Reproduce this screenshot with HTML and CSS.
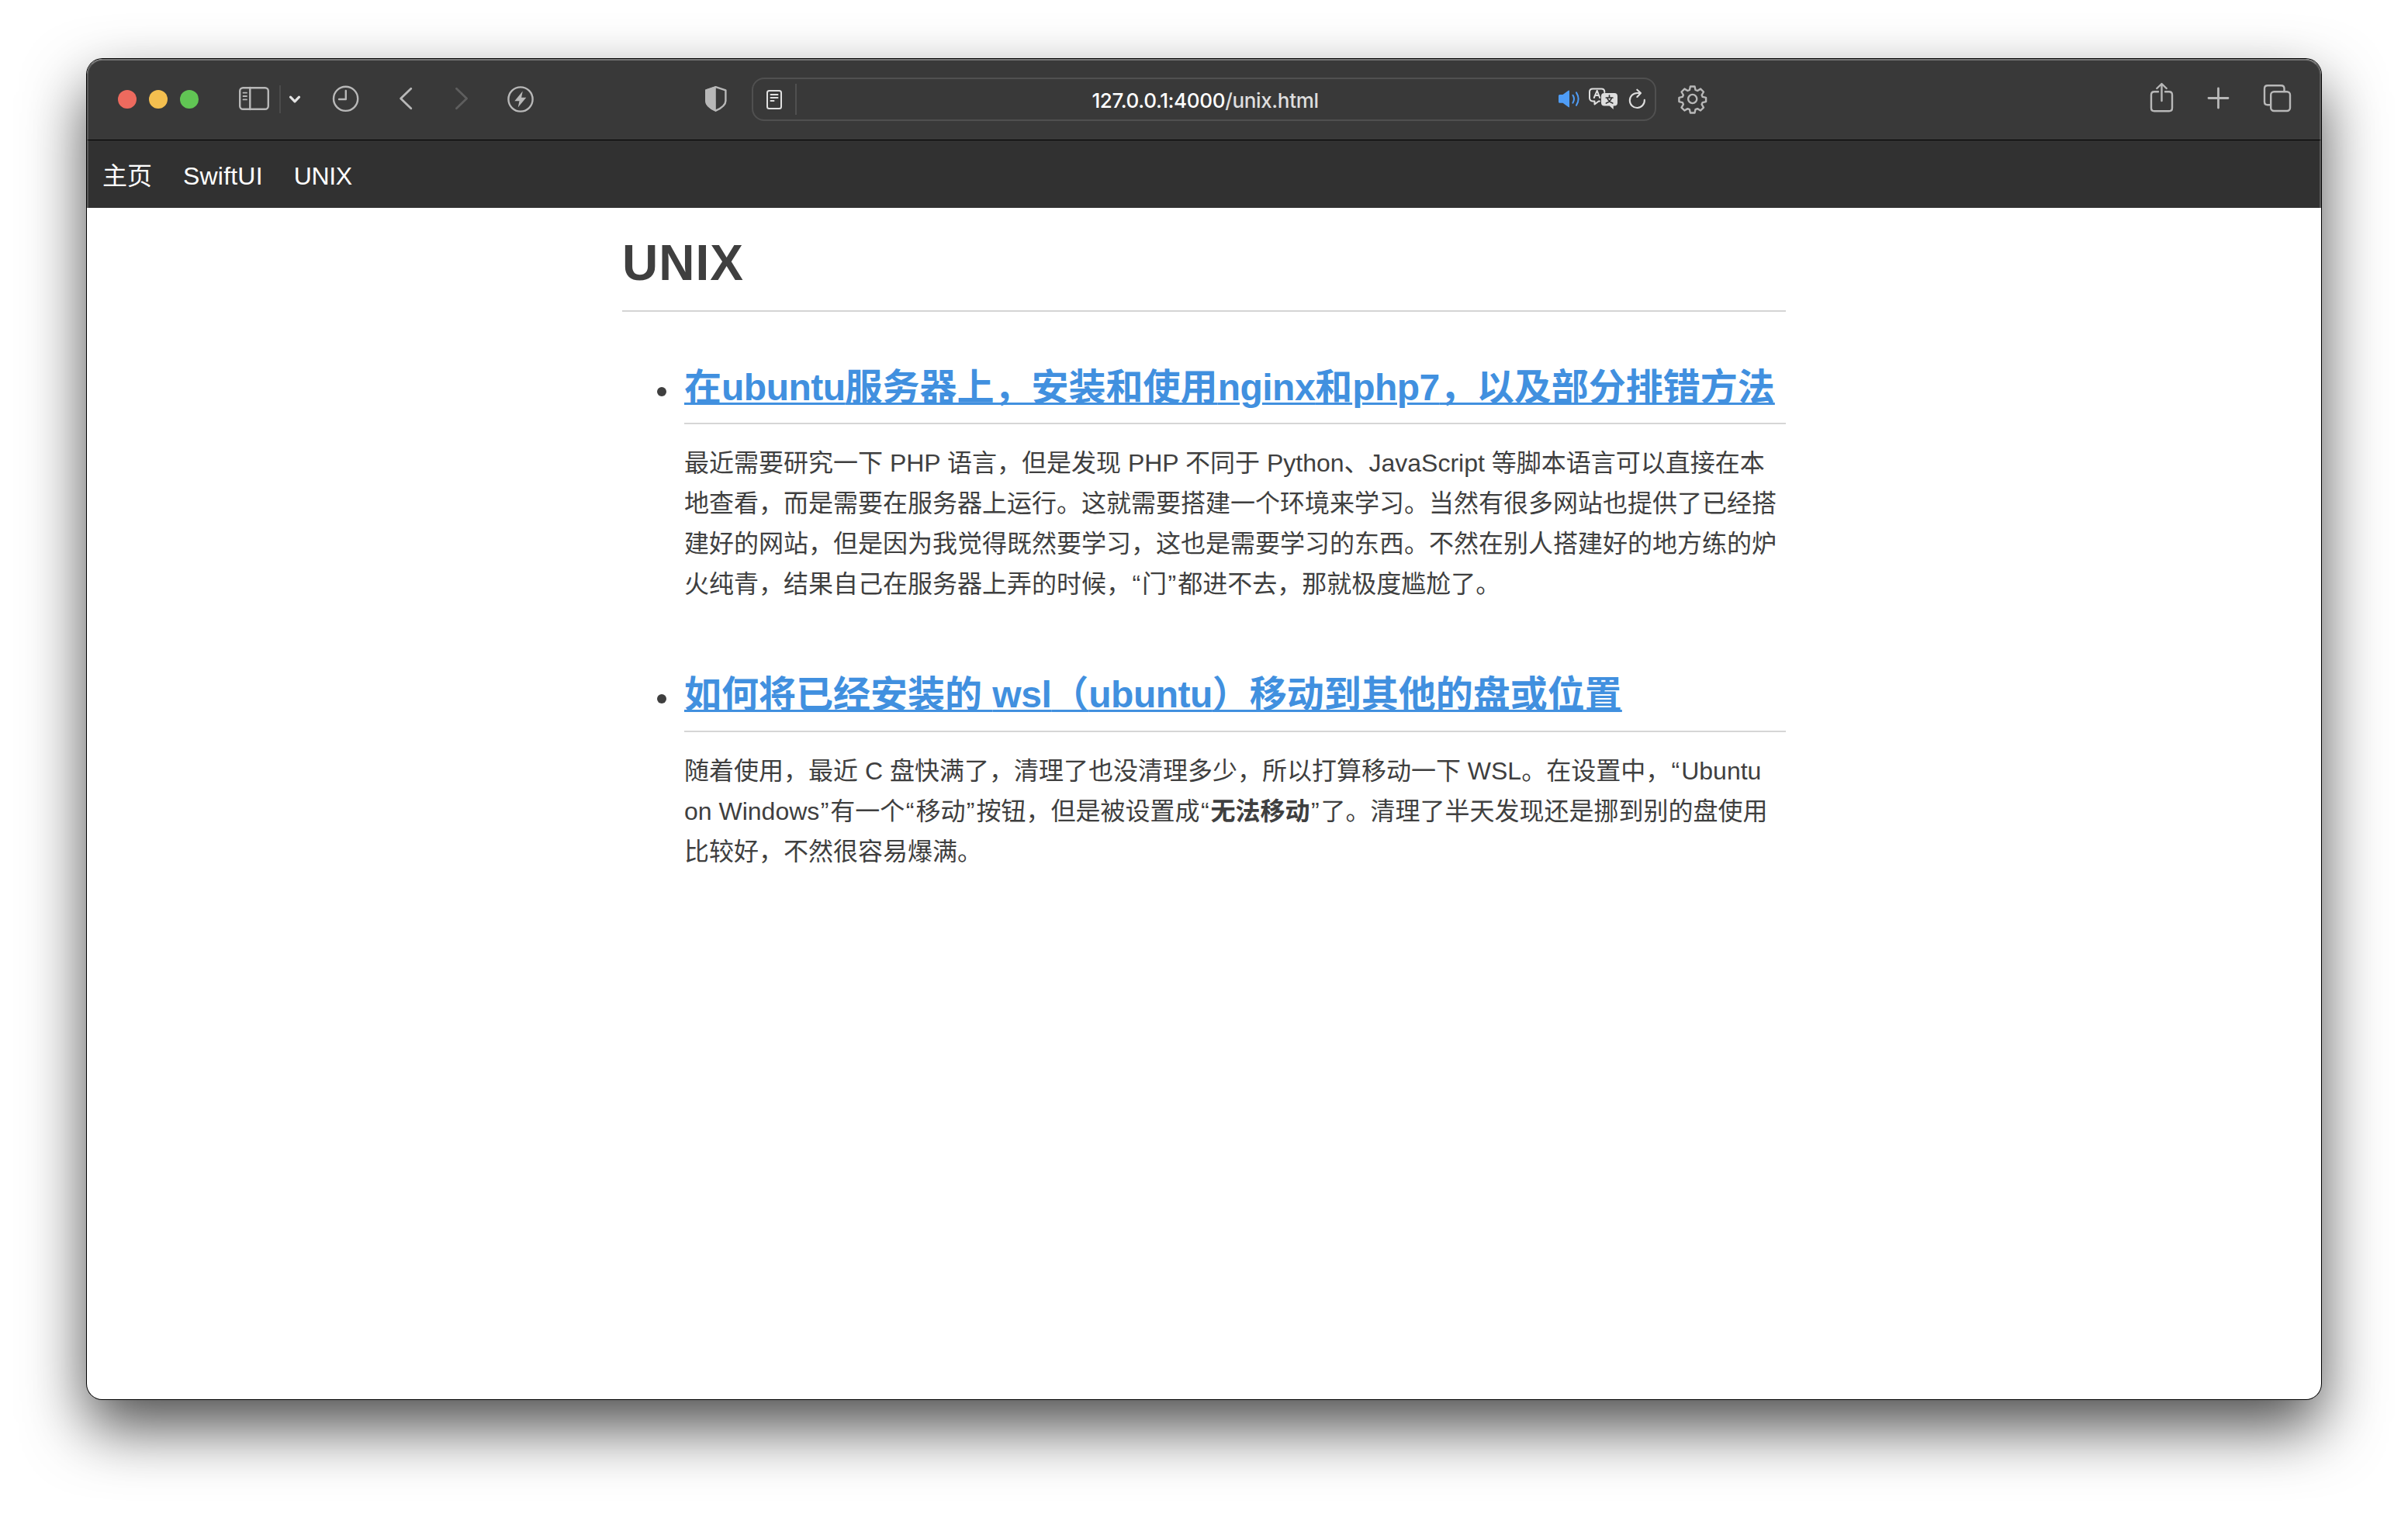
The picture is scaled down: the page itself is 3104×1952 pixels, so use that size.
FILE: index.html
```html
<!DOCTYPE html>
<html lang="zh-CN">
<head>
<meta charset="utf-8">
<title>UNIX</title>
<link rel="stylesheet" href="styles.css">
</head>
<body>
<div class="window">
  <div class="toolbar">
    <div class="lights"><i class="light red"></i><i class="light yellow"></i><i class="light green"></i></div>
    <svg class="icon sidebar" width="48" height="48" viewBox="304 104 48 48"><rect x="309.2" y="113.2" width="36.6" height="27.6" rx="4"/><path d="M322.3 113v28"/><path class="thin" d="M313.5 119.7h4.5M313.5 124h4.5M313.5 128.4h4.5"/></svg>
    <i class="rule"></i>
    <svg class="icon menu" width="24" height="48" viewBox="368 104 24 48"><path d="M374.5 125.2l5.5 5.6 5.5-5.6"/></svg>
    <svg class="icon clock" width="44" height="48" viewBox="424 104 44 48"><circle cx="445.6" cy="127.3" r="15.6"/><path d="M445.8 117v11H437"/></svg>
    <svg class="icon back" width="32" height="48" viewBox="508 104 32 48"><path d="M529.8 114.3L516.6 127l13.2 12.7"/></svg>
    <svg class="icon forward" width="32" height="48" viewBox="580 104 32 48"><path d="M588.4 114.3L601.6 127l-13.2 12.7"/></svg>
    <svg class="icon bolt" width="42" height="48" viewBox="650 104 42 48"><circle cx="671" cy="128" r="15.6"/><path class="solid" d="M673.8 117.6L663.3 130.2h6.2l-1.8 8.2L678.3 125.7h-6.2z"/></svg>
    <svg class="icon shield" width="38" height="48" viewBox="904 104 38 48"><path d="M922.6 112.2l12.800 4.100v13.600c0 5.600-5 9.200-12.800 12.800-7.800-3.600-12.400-7.200-12.400-12.800v-13.600z"/><path class="solid" d="M922.800 111.200l-13.600 4.600v14c0 6 5 10 13.600 14z"/></svg>
    <div class="address">
      <svg class="icon reader" width="28" height="48" viewBox="984 104 28 48"><rect x="989" y="117" width="18" height="23" rx="2.500"/><path d="M993.500 122h9M993.500 126h9M993.500 130h4"/></svg>
      <i class="rule tall"></i>
      <div class="url">127.0.0.1:4000<span class="path">/unix.html</span></div>
      <svg class="icon sound" width="36" height="48" viewBox="2004 104 36 48"><path class="solid" d="M2010.500 122h4l7.200-5.200q1.300-.7 1.300.8v19.800q0 1.500-1.300.7l-7.200-5.300h-4q-1.500 0-1.500-1.500v-7.800q0-1.500 1.500-1.500z"/><path d="M2027.500 122.800q3 4.700 0 9.800M2032 119.400q5.200 8.200 0 16.400"/></svg>
      <svg class="icon translate" width="46" height="48" viewBox="2044 104 46 48"><path d="M2062 130.500h-1.300l-5.200 4v-4h-2.500q-4-.5-4-4.500v-7.500q0-4 4-4h11.300q4 0 4 4v.5"/><path d="M2054.800 126l3.900-9.200 3.500 9.200M2056 123h5"/><path class="solid" d="M2068 120h13q4 0 4 4v8.500q0 4-4 4h-1.300v4.500l-5-4.500h-6.700q-4 0-4-4V124q0-4 4-4z"/><path class="cut" d="M2074.500 123v2M2070.300 126h8.600M2072 126.800q1.500 4.200 6.800 6.200M2077.200 126.800q-1.500 4.200-6.800 6.200"/></svg>
      <svg class="icon reload" width="30" height="48" viewBox="2096 104 30 48"><path d="M2119.800 128.800a9.500 9.500 0 1 1-9.400-8.800h4.200M2110.300 115.700l4.700 4.300-4.700 5"/></svg>
    </div>
    <svg class="icon gear" width="44" height="48" viewBox="2160 104 44 48"><circle cx="2181.700" cy="127.500" r="5.600"/><path d="M2178.900 111.500h5.600l1 4.400 2.600 1.100 4-2.400 3.900 3.900-2.400 4 1.100 2.400 4.400 1v5.200l-4.400 1-1.100 2.500 2.400 4-3.900 3.900-4-2.400-2.600 1.100-1 4.300h-5.600l-1-4.300-2.500-1.100-4 2.400-3.900-3.900 2.400-4-1.100-2.500-4.400-1v-5.200l4.400-1 1.100-2.400-2.400-4 3.900-3.900 4 2.400 2.500-1.100z"/></svg>
    <svg class="icon share" width="38" height="48" viewBox="2768 104 38 48"><path d="M2782 118.200h-5q-4 0-4 4v17q0 4 4 4h19q4 0 4-4v-17q0-4-4-4h-5M2786.500 130v-21.500M2780.300 114l6.200-6 6.200 6"/></svg>
    <svg class="icon plus" width="40" height="48" viewBox="2840 104 40 48"><path d="M2847 126.500h25M2859.500 114v25"/></svg>
    <svg class="icon tabs" width="48" height="48" viewBox="2912 104 48 48"><rect x="2927.200" y="118.200" width="24.800" height="24.800" rx="4"/><path d="M2926.500 135.200h-3.500q-4 0-4-4v-17q0-4 4-4h17.500q4 0 4 4v3.500"/></svg>
  </div>
  <nav class="nav"><a>主页</a><a class="wide">SwiftUI</a><a class="snug">UNIX</a></nav>
  <main class="content">
    <h1>UNIX</h1>
    <ul class="posts">
      <li class="post">
        <i class="dot"></i>
        <div class="body">
          <h2><a>在<span class="latin">ubuntu</span>服务器上，安装和使用<span class="latin">nginx</span>和<span class="latin">php7</span>，以及部分排错方法</a></h2>
          <p>最近需要研究一下 PHP 语言，但是发现 PHP 不同于 Python、JavaScript 等脚本语言可以直接在本地查看，而是需要在服务器上运行。这就需要搭建一个环境来学习。当然有很多网站也提供了已经搭建好的网站，但是因为我觉得既然要学习，这也是需要学习的东西。不然在别人搭建好的地方练的炉火纯青，结果自己在服务器上弄的时候，<span class="quote open">“</span>门<span class="quote">”</span>都进不去，那就极度尴尬了。</p>
        </div>
      </li>
      <li class="post">
        <i class="dot"></i>
        <div class="body">
          <h2><a>如何将已经安装的 <span class="latin">wsl</span>（<span class="latin">ubuntu</span>）移动到其他的盘或位置</a></h2>
          <p>随着使用，最近 C 盘快满了，清理了也没清理多少，所以打算移动一下 WSL。在设置中，<span class="quote open">“</span>Ubuntu on Windows<span class="quote">”</span>有一个<span class="quote open">“</span>移动<span class="quote">”</span>按钮，但是被设置成<span class="quote open">“</span><strong>无法移动</strong><span class="quote">”</span>了。清理了半天发现还是挪到别的盘使用比较好，不然很容易爆满。</p>
        </div>
      </li>
    </ul>
  </main>
</div>
</body>
</html>
```
FILE: styles.css
```css
* { box-sizing: border-box; }
html, body { height: 100%; }
body {
  margin: 0;
  padding: 76px 112px 148px;
  overflow: hidden;
  background: #fff;
  color: #3f3f3f;
  font: 32px/52px "Liberation Sans", "Noto Sans CJK SC", sans-serif;
  text-spacing-trim: space-all;
}
.window {
  height: 1728px;
  border-radius: 20px;
  background: #fff;
  box-shadow: 0 0 0 1px #000, 0 36px 80px rgba(0, 0, 0, .7);
}

/* toolbar */
.toolbar {
  display: flex;
  align-items: center;
  height: 104px;
  padding-left: 38px;
  border: 2px solid #5c5c5c;
  border-top-color: #757575;
  border-bottom: 0;
  border-radius: 20px 20px 0 0;
  background: #393939;
}
.toolbar > * { flex: none; position: relative; top: -1px; }
.lights { display: flex; gap: 16px; }
.light { width: 24px; height: 24px; border-radius: 50%; }
.red { background: #ed6a5e; }
.yellow { background: #f4bf4f; }
.green { background: #61c554; }
.icon {
  flex: none;
  fill: none;
  stroke: #b8b8b8;
  stroke-width: 2.4;
  stroke-linecap: round;
  stroke-linejoin: round;
}
.icon .solid { fill: #b8b8b8; stroke: none; }
.icon .thin { stroke-width: 1.8; }
.rule { width: 2px; height: 36px; background: #4b4b4b; }
.rule.tall { height: 40px; margin-left: 13px; background: #505050; }
.sidebar { margin-left: 48px; }
.toolbar > .rule { margin-left: 8px; }
.menu { margin-left: 6px; stroke: #e4e4e4; stroke-width: 3.2; }
.clock { margin-left: 32px; }
.back { margin-left: 40px; stroke-width: 2.8; }
.forward { margin-left: 40px; stroke: #5e5e5e; stroke-width: 2.8; }
.bolt { margin-left: 38px; }
.shield { margin-left: 212px; }
.address {
  display: flex;
  align-items: center;
  width: 1166px;
  height: 56px;
  margin-left: 27px;
  padding: 0 7px 0 13px;
  border: 2px solid #505050;
  border-radius: 16px;
}
.reader { stroke: #e0e0e0; stroke-width: 2; }
.url {
  flex: 1;
  padding: 3px 0 0 76px;
  color: #fff;
  font: 500 26px/52px Inter, "Liberation Sans", sans-serif;
  letter-spacing: -.35px;
  text-align: center;
}
.path { color: #dedede; }
.sound { stroke: #4f9df7; stroke-width: 2; }
.icon.sound .solid { fill: #4f9df7; }
.translate { margin-left: 4px; stroke: #dedede; stroke-width: 2; }
.icon.translate .solid { fill: #dedede; }
.translate .cut { stroke: #333; stroke-width: 1.7; }
.reload { margin-left: 6px; stroke: #dedede; stroke-width: 2.1; }
.gear { margin-left: 25px; }
.share { margin-left: 564px; }
.plus { margin-left: 34px; stroke-width: 2.8; }
.tabs { margin-left: 32px; }

/* site navigation */
.nav {
  display: flex;
  gap: 40px;
  height: 88px;
  padding: 20px 18px 0;
  border: solid #5a5a5a;
  border-width: 1px 2px 0;
  border-top-color: #000;
  background: #313131;
  color: #fff;
}
.wide { letter-spacing: .2px; }
.snug { letter-spacing: -.4px; }

/* article list */
.content { width: 1500px; margin: 0 auto; }
h1 {
  height: 134px;
  margin: 0;
  padding-top: 33px;
  border-bottom: 2px solid #d4d4d4;
  font-size: 64px;
  line-height: 76px;
  letter-spacing: 1px;
}
.posts { margin: 0; padding: 56px 0 0; list-style: none; }
.post { display: flex; height: 397px; }
.dot {
  flex: none;
  width: 12px;
  height: 12px;
  margin: 41px 23px 0 45px;
  border-radius: 50%;
  background: #3f3f3f;
}
.body { flex: none; width: 1420px; }
h2 {
  height: 89px;
  margin: 0;
  border-bottom: 2px solid #d6d6d6;
  color: #4190df;
  font-size: 48px;
  line-height: 83px;
}
.post + .post h2 { line-height: 81px; }
.post + .post .dot { margin-top: 40px; }
h2 a { text-decoration: underline; text-decoration-thickness: 3px; text-underline-offset: 3px; white-space: nowrap; }
.latin { letter-spacing: -.5px; }
p { margin: 24px 0 0; }
.quote { padding-right: 2px; padding-left: 1.4px; }
```
